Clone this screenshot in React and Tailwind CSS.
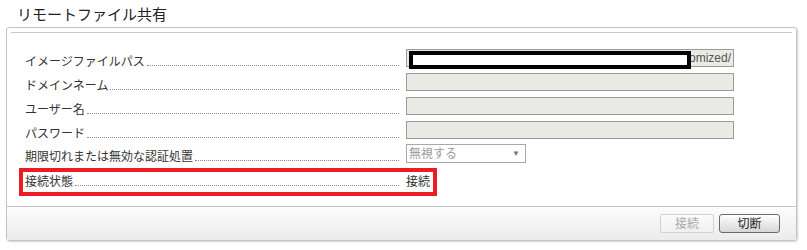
import React from "react";

const FONT = { fontFamily: '"Liberation Sans", "Noto Sans CJK JP", sans-serif' };

function Label({ text }) {
  return (
    <div className="flex h-[16px] w-[374px] items-end text-[12px] leading-[16px] text-[#333]">
      <span className="whitespace-nowrap">{text}</span>
      <span className="mb-[4px] ml-[2px] flex-1 border-b border-dotted border-[#8a8a8a]" />
    </div>
  );
}

function InputRow({ text, children }) {
  return (
    <div className="flex h-[24px] items-start">
      <div className="mt-[8px]">
        <Label text={text} />
      </div>
      <div className="ml-[7px] mt-[3px]">
        {children || <div className="h-[18px] w-[328px] border border-[#9b9b9b] bg-[#eae9e3]" />}
      </div>
    </div>
  );
}

export default function App() {
  return (
    <div className="relative h-[250px] w-[807px] bg-white" style={FONT}>
      <div className="pl-[17px] pt-[5px] text-[15px] leading-[20px] text-[#222]">リモートファイル共有</div>
      <div className="ml-[6px] mt-[2px] w-[791px] rounded-[3px] border border-[#c4c4c4] shadow-[1px_1px_2px_rgba(0,0,0,0.18)]">
        <div className="mx-[4px] h-[5px] border-b border-[#c8c8c8]" />
        <div className="pl-[18px] pt-[13px] pb-[16px]">
          <InputRow text="イメージファイルパス">
            <div className="relative h-[18px] w-[328px] border border-[#9b9b9b] bg-[#eae9e3]">
              <div className="flex h-full items-center justify-end pr-[2px] text-[12px] leading-[16px] text-[#555]">
                omized/
              </div>
              <div className="absolute left-[2px] top-[1px] h-[18px] w-[282px] border-[4px] border-black bg-white" />
            </div>
          </InputRow>
          <InputRow text="ドメインネーム" />
          <InputRow text="ユーザー名" />
          <InputRow text="パスワード" />
          <div className="flex h-[24px] items-start">
            <div className="mt-[7px]">
              <Label text="期限切れまたは無効な認証処置" />
            </div>
            <div className="ml-[7px] mt-[2px] flex h-[19px] w-[120px] items-center justify-between border border-[#a8a8a8] bg-white pl-[2px] pr-[5px]">
              <span className="text-[12px] leading-[16px] text-[#9a9a9a]">無視する</span>
              <span className="text-[8px] leading-[8px] text-[#777]">▼</span>
            </div>
          </div>
          <div className="relative flex h-[24px] items-start">
            <div className="mt-[8px]">
              <Label text="接続状態" />
            </div>
            <div className="ml-[7px] mt-[8px] text-[12px] leading-[16px] text-[#333]">接続</div>
            <div className="absolute left-[-6px] top-[2px] h-[28px] w-[418px] border-[4px] border-[#ed1c24]" />
          </div>
        </div>
        <div className="flex h-[34px] items-center justify-end gap-[5px] border-t border-[#c4c4c4] bg-gradient-to-b from-[#fcfcfc] to-[#ebebeb] pr-[16px]">
          <div className="flex h-[19px] w-[54px] items-center justify-center rounded-[2px] border border-[#d2d2d2] bg-gradient-to-b from-[#fbfbfb] to-[#f0f0f0] text-[12px] leading-[16px] text-[#a9a9a9]">
            接続
          </div>
          <div className="flex h-[19px] w-[61px] items-center justify-center rounded-[3px] border border-[#6a6a6a] bg-gradient-to-b from-[#ffffff] to-[#d6d6d6] text-[12px] leading-[16px] text-[#222]">
            切断
          </div>
        </div>
      </div>
    </div>
  );
}
